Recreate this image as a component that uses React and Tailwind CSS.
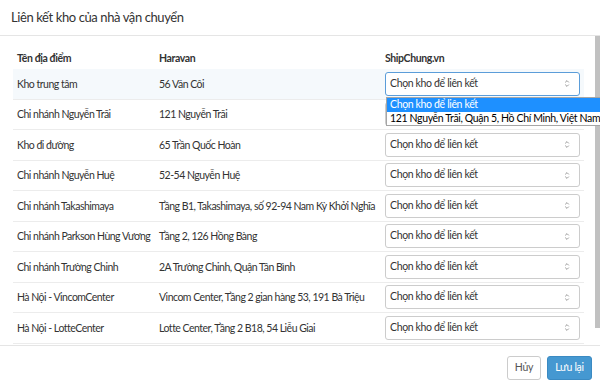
import React from "react";

const rows = [
  ["Kho trung tâm", "56 Văn Côi"],
  ["Chi nhánh Nguyễn Trãi", "121 Nguyễn Trãi"],
  ["Kho đi đường", "65 Trần Quốc Hoàn"],
  ["Chi nhánh Nguyễn Huệ", "52-54 Nguyễn Huệ"],
  ["Chi nhánh Takashimaya", "Tầng B1, Takashimaya, số 92-94 Nam Kỳ Khởi Nghĩa"],
  ["Chi nhánh Parkson Hùng Vương", "Tầng 2, 126 Hồng Bàng"],
  ["Chi nhánh Trường Chinh", "2A Trường Chinh, Quận Tân Bình"],
  ["Hà Nội - VincomCenter", "Vincom Center, Tầng 2 gian hàng 53, 191 Bà Triệu"],
  ["Hà Nội - LotteCenter", "Lotte Center, Tầng 2 B18, 54 Liễu Giai"],
];

function Arrows() {
  return (
    <svg width="6" height="9" viewBox="0 0 6 9" className="shrink-0">
      <path d="M1.2 3.4 L3 1.6 L4.8 3.4" fill="none" stroke="#999" strokeWidth="1" />
      <path d="M1.2 5.6 L3 7.4 L4.8 5.6" fill="none" stroke="#999" strokeWidth="1" />
    </svg>
  );
}

function Select({ focus }) {
  return (
    <div
      className={
        "h-[24px] w-full rounded-[3px] border flex items-center justify-between pl-[4px] pr-[9px] bg-white " +
        (focus ? "border-[#5b9dd9]" : "border-[#cccccc]")
      }
    >
      <span className="text-[10.5px] tracking-[-0.35px] text-[#333]">Chọn kho để liên kết</span>
      <Arrows />
    </div>
  );
}

export default function App() {
  return (
    <div className="relative w-[600px] h-[389px] overflow-hidden bg-white flex flex-col text-[#333] font-['Lato',sans-serif]">
      <div className="h-[36px] shrink-0 border-b border-[#e5e5e5] flex items-center pl-[11px] text-[13px] tracking-[-0.4px] text-[#333]">
        Liên kết kho của nhà vận chuyển
      </div>
      <div className="flex-1 flex overflow-hidden">
        <div className="flex-1 pl-[13px] pr-[11px] pt-[12px] overflow-hidden">
          <div className="flex h-[21px] items-center text-[10.5px] tracking-[-0.4px] font-bold">
            <div className="w-[142px] pl-[4px]">Tên địa điểm</div>
            <div className="w-[226px] pl-[4px]">Haravan</div>
            <div className="flex-1 pl-[4px]">ShipChung.vn</div>
          </div>
          {rows.map(([a, b], i) => (
            <div
              key={i}
              className={
                "flex h-[30.5px] items-center text-[10.5px] tracking-[-0.5px] border-b border-[#ececec] " +
                (i === 0 ? "bg-[#f5f9fc]" : "")
              }
            >
              <div className="w-[142px] pl-[4px] pt-[2px] whitespace-nowrap">{a}</div>
              <div className="w-[226px] pl-[4px] pt-[2px] whitespace-nowrap">{b}</div>
              <div className="flex-1 px-[4px]">
                <Select focus={i === 0} />
              </div>
            </div>
          ))}
        </div>
        <div className="w-[5px] shrink-0">
          <div className="h-[292px] bg-[#c1c1c1]" />
        </div>
      </div>
      <div className="h-[44px] shrink-0 border-t border-[#e5e5e5] flex items-center justify-end gap-[6px] pr-[8px]">
        <button className="h-[24px] w-[34px] rounded-[3px] border border-[#cccccc] bg-white text-[10.5px] tracking-[-0.3px] text-[#555] flex items-center justify-center">
          Hủy
        </button>
        <button className="h-[24px] w-[45px] rounded-[3px] border border-[#3b8ac2] bg-[#4598d1] text-[10.5px] tracking-[-0.3px] text-white flex items-center justify-center">
          Lưu lại
        </button>
      </div>
      <div className="absolute top-[97px] left-[386px] w-[240px] border border-[#a6a6a6] bg-white text-[10.5px] tracking-[-0.35px] leading-[13px]">
        <div className="bg-[#1e90ff] text-white pl-[3px] h-[13.5px] whitespace-nowrap">Chọn kho để liên kết</div>
        <div className="text-black pl-[3px] h-[13px] whitespace-nowrap">121 Nguyễn Trãi, Quận 5, Hồ Chí Minh, Việt Nam</div>
      </div>
    </div>
  );
}
